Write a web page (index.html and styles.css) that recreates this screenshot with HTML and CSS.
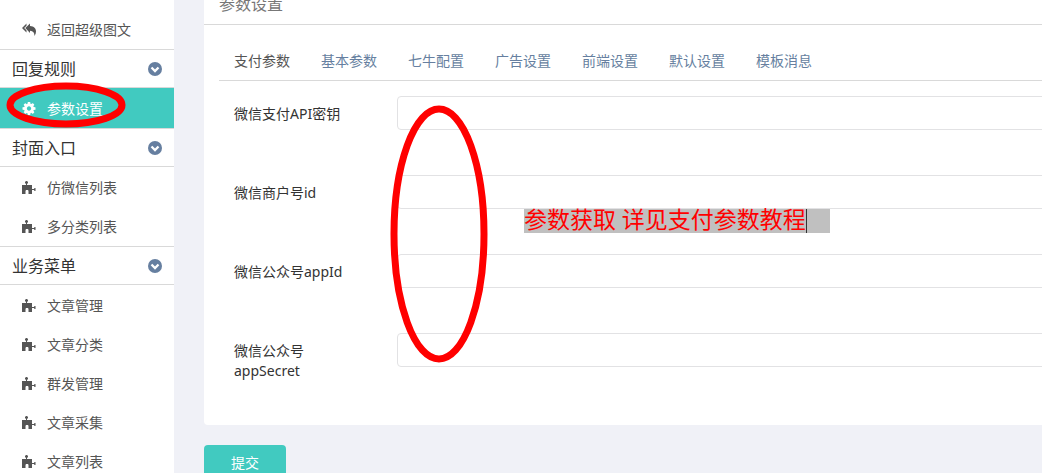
FILE: index.html
```html
<!DOCTYPE html>
<html lang="zh-CN">
<head>
    <meta charset="UTF-8">
    <meta name="viewport" content="width=device-width, initial-scale=1.0">
    <title>参数设置</title>
    <link rel="stylesheet" href="styles.css">
</head>
<body>
    <svg class="sprite" aria-hidden="true">
        <symbol id="icon-reply-all" viewBox="0 0 14 13">
            <path d="M4.500.5v2.200L2.200 5l2.300 2.300v2.200L0 5z"/>
            <path d="M8 .5v2.400c4 .2 6 2.500 6 5.600 0 1.500-.5 3-1.500 4.500 0-3.400-1.300-5-4.500-5.200v2.200L3.300 5z"/>
        </symbol>
        <symbol id="icon-cog" viewBox="128 128 1536 1536">
            <path d="M1152 896q0-106-75-181t-181-75-181 75-75 181 75 181 181 75 181-75 75-181zm512-109v222q0 12-8 23t-20 13l-185 28q-19 54-39 91 35 50 107 138 10 12 10 25t-9 23q-27 37-99 108t-94 71q-12 0-26-9l-138-108q-44 23-91 38-16 136-29 186-7 28-36 28h-222q-14 0-24.5-8.5t-11.5-21.5l-28-184q-49-16-90-37l-141 107q-10 9-25 9-14 0-25-11-126-114-165-168-7-10-7-23 0-12 8-23 15-21 51-66.5t54-70.5q-27-50-41-99l-183-27q-13-2-21-12.5t-8-23.5v-222q0-12 8-23t19-13l186-28q14-46 39-92-40-57-107-138-10-12-10-24 0-10 9-23 26-36 98.500-107.500t94.500-71.500q13 0 26 10l138 107q44-23 91-38 16-136 29-186 7-28 36-28h222q14 0 24.500 8.500t11.500 21.500l28 184q49 16 90 37l142-107q9-9 24-9 13 0 25 10 129 119 165 170 7 8 7 22 0 12-8 23-15 21-51 66.500t-54 70.500q26 50 41 98l183 28q13 2 21 12.500t8 23.500z"/>
        </symbol>
        <symbol id="icon-puzzle" viewBox="0 0 14 13">
            <path d="M0 4h4V3L3 2V1l1-1h1l1 1v1L5 3v1h5v4h2l.5-1h1v3h-1L12 9h-2v4H6.500v-3L6 9H4l-.5 1v3H0z"/>
        </symbol>
        <symbol id="icon-chevron" viewBox="0 0 14 14">
            <circle cx="7" cy="7" r="7"/>
            <path d="M3.500 5.500 7 9l3.500-3.500" fill="none" stroke="#fff" stroke-width="2.300"/>
        </symbol>
    </svg>

    <div class="page">
        <nav class="sidebar">
            <ul class="menu menu-back">
                <li><a href="#"><svg class="icon"><use href="#icon-reply-all"/></svg>返回超级图文</a></li>
            </ul>

            <h3 class="menu-title">回复规则<svg class="chevron"><use href="#icon-chevron"/></svg></h3>
            <ul class="menu">
                <li class="active"><a href="#"><svg class="icon"><use href="#icon-cog"/></svg>参数设置</a></li>
            </ul>

            <h3 class="menu-title">封面入口<svg class="chevron"><use href="#icon-chevron"/></svg></h3>
            <ul class="menu">
                <li><a href="#"><svg class="icon"><use href="#icon-puzzle"/></svg>仿微信列表</a></li>
                <li><a href="#"><svg class="icon"><use href="#icon-puzzle"/></svg>多分类列表</a></li>
            </ul>

            <h3 class="menu-title">业务菜单<svg class="chevron"><use href="#icon-chevron"/></svg></h3>
            <ul class="menu">
                <li><a href="#"><svg class="icon"><use href="#icon-puzzle"/></svg>文章管理</a></li>
                <li><a href="#"><svg class="icon"><use href="#icon-puzzle"/></svg>文章分类</a></li>
                <li><a href="#"><svg class="icon"><use href="#icon-puzzle"/></svg>群发管理</a></li>
                <li><a href="#"><svg class="icon"><use href="#icon-puzzle"/></svg>文章采集</a></li>
                <li><a href="#"><svg class="icon"><use href="#icon-puzzle"/></svg>文章列表</a></li>
            </ul>
        </nav>

        <main class="main">
            <form>
                <section class="panel">
                    <h1 class="panel-title">参数设置</h1>
                    <div class="panel-body">
                        <nav class="tabs">
                            <a class="active" href="#">支付参数</a>
                            <a href="#">基本参数</a>
                            <a href="#">七牛配置</a>
                            <a href="#">广告设置</a>
                            <a href="#">前端设置</a>
                            <a href="#">默认设置</a>
                            <a href="#">模板消息</a>
                        </nav>
                        <div class="fields">
                            <div class="row">
                                <label for="apiKey">微信支付API密钥</label>
                                <input type="text" id="apiKey">
                            </div>
                            <div class="row">
                                <label for="mchId">微信商户号id</label>
                                <input type="text" id="mchId">
                            </div>
                            <div class="row">
                                <label for="appId">微信公众号appId</label>
                                <input type="text" id="appId">
                            </div>
                            <div class="row">
                                <label for="appSecret">微信公众号appSecret</label>
                                <input type="text" id="appSecret">
                            </div>
                        </div>
                    </div>
                </section>
                <button class="submit" type="submit">提交</button>
            </form>
        </main>

        <!-- 标注 -->
        <svg class="mark mark-menu" viewBox="0 0 120 46"><ellipse cx="60" cy="23" rx="56" ry="19"/></svg>
        <svg class="mark mark-fields" viewBox="0 0 98 258"><ellipse cx="49" cy="129" rx="45" ry="125"/></svg>
        <p class="note"><span>参数获取 详见支付参数教程</span></p>
    </div>
</body>
</html>
```
FILE: styles.css
```css
* {
    box-sizing: border-box;
}

body {
    margin: 0;
    background-color: #f0f1f7;
    color: #333;
    font-family: "Noto Sans", "Noto Sans CJK SC", sans-serif;
    font-size: 14px;
    line-height: 20px;
}

a {
    text-decoration: none;
}

.sprite {
    display: none;
}

.page {
    position: relative;
    display: flex;
    height: 100vh;
    overflow: hidden;
}

/* 左侧菜单 */
.sidebar {
    flex: none;
    width: 174px;
    padding-top: 10px;
    background-color: #fff;
}

.menu {
    margin: 0;
    padding: 1px 0 0;
    list-style: none;
}

.menu-back {
    padding-top: 0;
}

.menu a {
    display: flex;
    align-items: center;
    gap: 11px;
    height: 39px;
    padding-left: 22px;
    color: #555;
}

.menu .active {
    margin-top: -1px;
}

.menu .active a {
    height: 40px;
    padding-top: 1px;
    background-color: #41cac0;
    color: #fff;
}

.icon {
    width: 14px;
    height: 13px;
    fill: currentColor;
}

.menu-title {
    display: flex;
    align-items: center;
    justify-content: space-between;
    height: 39px;
    margin: 0;
    padding: 0 12px;
    border-top: 1px solid #d9d9d9;
    border-bottom: 1px solid #d9d9d9;
    font-size: 16px;
    font-weight: normal;
}

.chevron {
    width: 14px;
    height: 14px;
    fill: #667fa0;
}

/* 内容 */
.main {
    flex: 1;
    min-width: 0;
    padding-left: 30px;
    overflow: hidden;
}

.panel {
    margin: -15px -30px 20px 0;
    background-color: #fff;
    border-radius: 4px;
}

.panel-title {
    height: 40px;
    margin: 0;
    padding: 0 15px;
    border-bottom: 1px solid #d9d9d9;
    color: #777;
    font-size: 16px;
    font-weight: normal;
    line-height: 38px;
}

.panel-body {
    padding: 15px 0 44px 15px;
}

.tabs {
    display: flex;
    gap: 1px;
    border-bottom: 1px solid #d9d9d9;
}

.tabs a {
    padding: 11px 15px 9px;
    color: #667fa0;
}

.tabs .active {
    color: #555;
}

.fields {
    display: grid;
    gap: 45px;
    padding: 15px 0 0 15px;
}

.row {
    display: flex;
    align-items: flex-start;
    gap: 33px;
}

.row label {
    flex: none;
    width: 130px;
    padding-top: 8px;
}

.row input {
    flex: 1;
    min-width: 0;
    height: 34px;
    padding: 6px 12px;
    border: 1px solid #e2e2e4;
    border-radius: 4px;
    background-color: #fff;
    font: inherit;
}

.submit {
    height: 36px;
    padding: 0 27px;
    border: none;
    border-radius: 4px;
    background-color: #41cac0;
    color: #fff;
    font: inherit;
    cursor: pointer;
}

/* 红色标注 */
.mark {
    position: absolute;
    fill: none;
    stroke: #f00;
    stroke-width: 7px;
    pointer-events: none;
}

.mark-menu {
    top: 82px;
    left: 6px;
    width: 120px;
    height: 46px;
}

.mark-fields {
    top: 105px;
    left: 390px;
    width: 98px;
    height: 258px;
}

.note {
    position: absolute;
    top: 209px;
    left: 524px;
    margin: 0;
    padding-right: 23px;
    background-color: #c0c0c0;
    color: #f00;
    font-family: "Liberation Serif", "Noto Sans CJK SC", serif;
    font-size: 23px;
    line-height: 24px;
}

.note span {
    display: block;
    border-right: 1px solid #333;
}
```
